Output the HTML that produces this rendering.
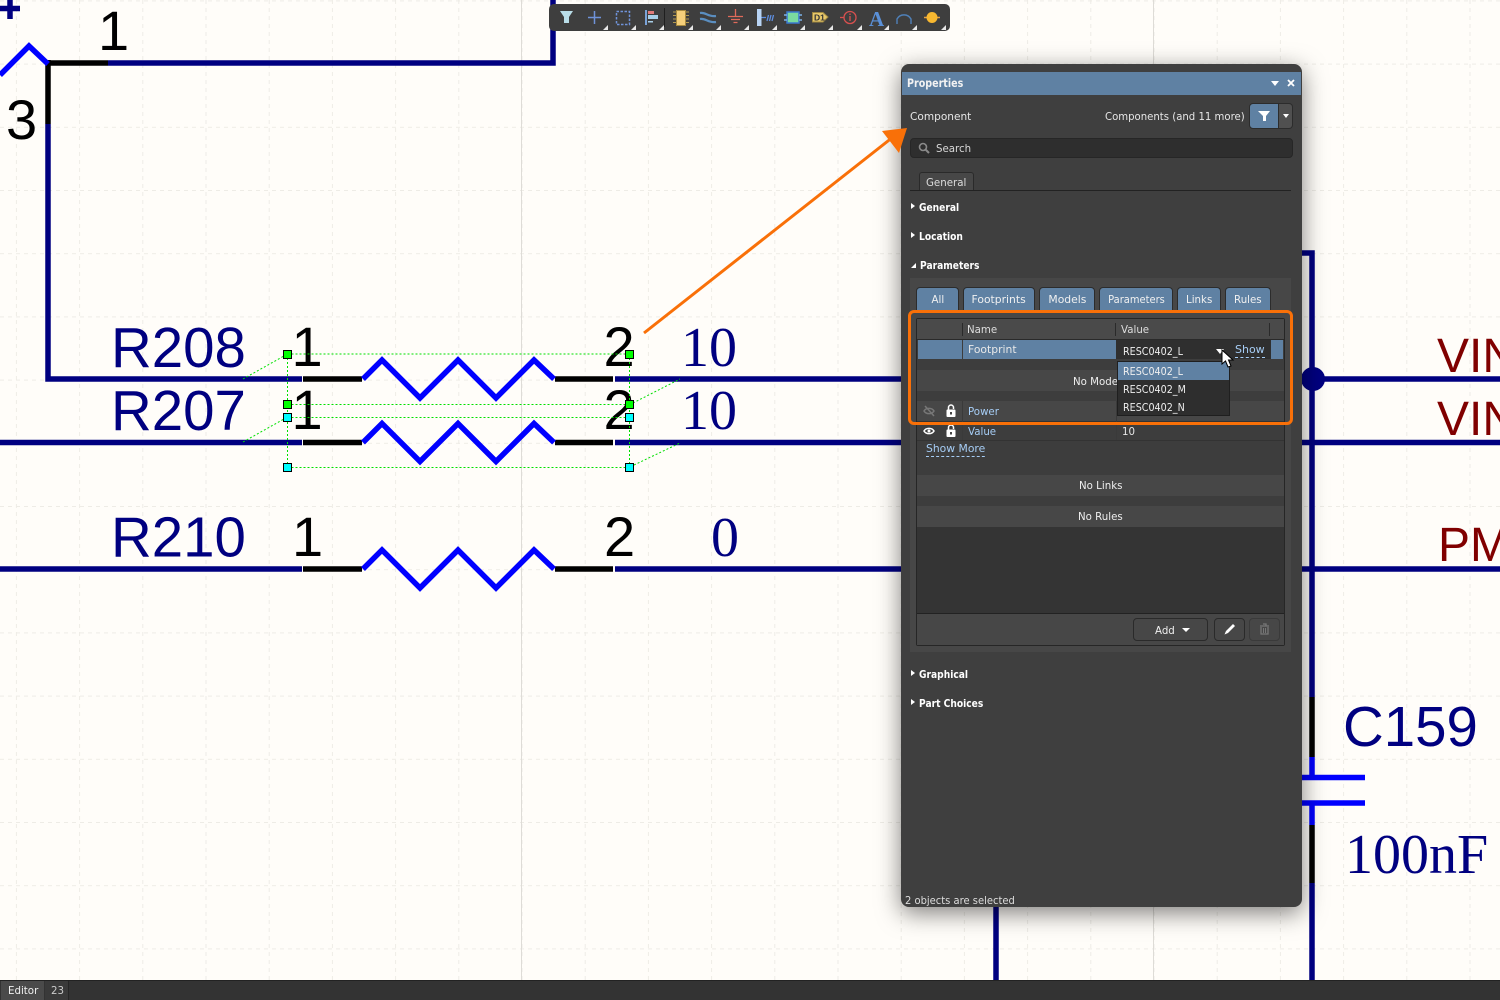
<!DOCTYPE html>
<html><head><meta charset="utf-8"><style>
html,body{margin:0;padding:0;background:#fffdf9;width:1500px;height:1000px;overflow:hidden}
*{box-sizing:border-box}
#c{position:absolute;left:0;top:0}
.a{position:absolute}
.t{position:absolute;font:11px/14px "DejaVu Sans",sans-serif;color:#e6e6e6;white-space:nowrap;transform:scaleX(.93);transform-origin:0 0;margin-top:1px}
.b{font-weight:bold;color:#fff;transform:scaleX(.83)}
.r{transform:scaleX(.87)}
.blue{color:#a6cdf5}
.tab{position:absolute;top:287px;height:24px;background:#5f81a3;border:1px solid #2c2c2c;border-bottom:0;border-radius:4px 4px 0 0;color:#f0f0f0;font:11px/24px "DejaVu Sans",sans-serif;text-align:center}
.tab span{display:inline-block;transform:scaleX(.93)}
.tri{position:absolute;width:0;height:0;border-top:3.5px solid transparent;border-bottom:3.5px solid transparent;border-left:4px solid #fff}
.btn{position:absolute;border:1px solid #2a2a2a;border-radius:4px;background:#474747}
.row{position:absolute;left:917px;width:367px}
</style></head><body>
<svg id="c" width="1500" height="1000" xmlns="http://www.w3.org/2000/svg">
<defs><pattern id="gv" width="63.2" height="8" patternUnits="userSpaceOnUse" x="15.9"><rect x="0" y="0" width="1" height="4" fill="#eeece6"/></pattern>
<pattern id="gh" width="8" height="63.2" patternUnits="userSpaceOnUse" y="63.6"><rect x="0" y="0" width="4" height="1" fill="#eeece6"/></pattern></defs>
<rect width="1500" height="980" fill="url(#gv)"/>
<rect width="1500" height="980" fill="url(#gh)"/>
<rect x="521" y="0" width="1" height="980" fill="#dedcd7"/>
<rect x="1153" y="0" width="1" height="980" fill="#dedcd7"/>
<g fill="none" stroke-width="5.5">
<g stroke="#000080">
<path d="M0 8.5H20M10 0V19"/>
<path d="M108 63H553V0"/>
<path d="M48 124V379H302M615 379H905"/>
<path d="M0 442.500H302M615 442.500H905"/>
<path d="M0 569H302M615 569H905"/>
<path d="M1302 253H1312V697M1312 883V980M996 905V980M1302 379H1500M1302 442.500H1500M1302 569H1500"/>
</g>
<g stroke="#000">
<path d="M48 63H108M48 60V124"/>
<path d="M303 379H362M555 379H613M303 442.500H362M555 442.500H613M303 569H362M555 569H613"/>
<path d="M1312 697V757M1312 825V883"/>
</g>
<g stroke="#0000ff" stroke-linejoin="miter">
<path d="M0 75L29 46L48 64"/>
<path d="M363 379L382 360L420 398L458 360L496 398L534 360L554 379"/>
<path d="M363 442.500L382 423.500L420 461.500L458 423.500L496 461.500L534 423.500L554 442.500"/>
<path d="M363 569L382 550L420 588L458 550L496 588L534 550L554 569"/>
<path d="M1312 757V777M1312 803V825"/>
<path d="M1300 777.500H1365M1300 803H1365"/>
</g>
</g>
<circle cx="1313" cy="379" r="12" fill="#000080"/>
<g font-family="'Liberation Sans',sans-serif" font-size="56.400" fill="#000080">
<text x="111" y="367">R208</text><text x="111" y="430">R207</text><text x="111" y="556.500">R210</text>
<text x="1343" y="746">C159</text>
</g>
<g font-family="'Liberation Sans',sans-serif" font-size="56" fill="#000">
<text x="98" y="50">1</text><text x="6" y="139">3</text>
<text x="291.500" y="366">1</text><text x="291.500" y="429">1</text><text x="292" y="556">1</text>
<text x="603.500" y="366">2</text><text x="603.500" y="429">2</text><text x="604" y="556">2</text>
</g>
<g font-family="'Liberation Serif',serif" font-size="56" fill="#000080">
<text x="681" y="366">10</text><text x="681" y="429">10</text><text x="711" y="556">0</text>
<text x="1345" y="873">100nF</text>
</g>
<g font-family="'Liberation Sans',sans-serif" font-size="48" fill="#800000">
<text x="1437" y="372">VIN</text><text x="1437" y="435">VIN</text>
<text x="1438" y="561">PM</text>
</g>
<g fill="none" stroke="#00e000" stroke-width="1" stroke-dasharray="2 2">
<path d="M287.500 354H629.500M287.500 404.500H629.500M287.500 417.500H629.500M287.500 467.500H629.500M287.500 354V467M629.500 354V467"/>
<path d="M243 379L284 356M243 442L284 419M633 403L680 379M634 465L680 443"/>
</g>
<g stroke="#000" stroke-width="1">
<g fill="#00ff00"><rect x="283.500" y="350.500" width="8" height="8"/><rect x="625.500" y="350.500" width="8" height="8"/><rect x="283.500" y="400.500" width="8" height="8"/><rect x="625.500" y="400.500" width="8" height="8"/></g>
<g fill="#00ffff"><rect x="283.500" y="413.500" width="8" height="8"/><rect x="625.500" y="413.500" width="8" height="8"/><rect x="283.500" y="463.500" width="8" height="8"/><rect x="625.500" y="463.500" width="8" height="8"/></g>
</g>
</svg>

<!-- toolbar -->
<div class="a" style="left:549px;top:4px;width:401px;height:27px;background:#3e3e3e;border-radius:5px"></div>
<svg class="a" style="left:549px;top:4px" width="401" height="27" xmlns="http://www.w3.org/2000/svg">
<path d="M11 7H24L20 13V19H15V13Z" fill="#b9dde8"/>
<path d="M45.500 7V20M39 13.500H52" stroke="#6f92d8" stroke-width="1.500" fill="none"/>
<rect x="67.500" y="7.500" width="13" height="13" fill="none" stroke="#6f92d8" stroke-width="1.500" stroke-dasharray="2.500 1.500"/>
<rect x="96" y="6" width="2" height="15" fill="#7aa3d8"/><rect x="99" y="7" width="6" height="3" fill="#e07a7a"/><rect x="99" y="11" width="10" height="4" fill="#a8cfe8"/><rect x="99" y="17" width="5" height="1.500" fill="#a8cfe8"/>
<rect x="115" y="4" width="1" height="19" fill="#1f1f1f"/>
<path d="M124 8H128M124 11.500H128M124 15H128M124 18.500H128M136 8H140M136 11.500H140M136 15H140M136 18.500H140" stroke="#b49a50" stroke-width="1"/>
<rect x="127.500" y="6.500" width="9" height="15" fill="#f5cf7a" stroke="#a88a40"/>
<path d="M151 9C157 8 159 13 167 12M151 15C157 14 159 19 167 18" stroke="#5a8ec0" stroke-width="2.200" fill="none"/>
<path d="M186.500 5V12M179 12.500H194M182 15.500H191M184.500 18.500H188.500" stroke="#e06a5a" stroke-width="1.300" fill="none"/>
<rect x="208" y="5" width="4.500" height="17" fill="#b8d4f5"/><path d="M212.500 13.500H217M218 17L219.500 11M220.500 17L222 11M223 17L224.500 11" stroke="#5f8fe0" stroke-width="1.300" fill="none"/>
<rect x="238" y="8" width="12" height="11" fill="#7adba0" stroke="#3a78d0" stroke-width="1.500"/><path d="M235 11H238M235 16H238M250 11H253M250 16H253" stroke="#7ab0e8" stroke-width="1.500"/>
<path d="M263.500 8.500H274L279 13L274 18H263.500Z" fill="#e8c86a" stroke="#a08840"/>
<text x="265" y="16.500" font-family="'Liberation Sans',sans-serif" font-size="8.500" font-weight="bold" fill="#333">D1</text>
<path d="M291 13.500H295" stroke="#d8504f" stroke-width="1.300"/><circle cx="301" cy="13.500" r="6" fill="none" stroke="#d8504f" stroke-width="1.300"/><path d="M301 12V17M301 9.500V11" stroke="#d8504f" stroke-width="1.300"/>
<text x="320" y="22" font-family="'Liberation Serif',serif" font-size="21" font-weight="bold" fill="#5a90d8">A</text>
<path d="M348 20V15A8 8 0 0 1 362 15V20" fill="none" stroke="#4f80b8" stroke-width="1.400"/>
<path d="M375 13.500H391" stroke="#e8a040" stroke-width="1.500"/><circle cx="383" cy="13.500" r="5.500" fill="#f8b830"/>
<g fill="#e8e8e8"><path d="M54 26H59V21Z"/><path d="M82 26H87V21Z"/><path d="M110 26H115V21Z"/><path d="M139 26H144V21Z"/><path d="M167 26H172V21Z"/><path d="M195 26H200V21Z"/><path d="M223 26H228V21Z"/><path d="M251 26H256V21Z"/><path d="M279 26H284V21Z"/><path d="M308 26H313V21Z"/><path d="M335 26H340V21Z"/><path d="M363 26H368V21Z"/><path d="M392 26H397V21Z"/></g>
</svg>

<!-- panel -->
<div class="a" style="left:901px;top:64px;width:401px;height:843px;background:#3f3f3f;border-radius:8px;box-shadow:0 6px 24px rgba(0,0,0,.5)"></div>
<div class="a" style="left:902px;top:72px;width:399px;height:23px;background:#5f81a3"></div>
<div class="t b" style="left:907px;top:75px;font-size:11.500px;color:#f2f2f2">Properties</div>
<div class="a" style="left:1271px;top:81px;border-left:4px solid transparent;border-right:4px solid transparent;border-top:5px solid #fff"></div>
<svg class="a" style="left:1287px;top:79px" width="8" height="8"><path d="M1 1L7 7M7 1L1 7" stroke="#fff" stroke-width="1.800"/></svg>
<div class="t" style="left:910px;top:109px;transform:scaleX(.96)">Component</div>
<div class="t" style="left:1105px;top:109px;transform:scaleX(.92)">Components (and 11 more)</div>
<div class="a" style="left:1249px;top:103px;width:30px;height:26px;background:#5f81a3;border:1px solid #2c2c2c;border-radius:4px 0 0 4px"></div>
<div class="a" style="left:1279px;top:103px;width:14px;height:26px;background:#505050;border:1px solid #2c2c2c;border-left:0;border-radius:0 4px 4px 0"></div>
<svg class="a" style="left:1258px;top:110px" width="12" height="12"><path d="M0 1H12L8 6V11H5V6Z" fill="#fff"/></svg>
<div class="a" style="left:1283px;top:114px;border-left:3.500px solid transparent;border-right:3.500px solid transparent;border-top:4px solid #fff"></div>
<div class="a" style="left:910px;top:138px;width:383px;height:20px;background:#2e2e2e;border:1px solid #262626;border-radius:4px"></div>
<svg class="a" style="left:918px;top:142px" width="12" height="12"><circle cx="5" cy="5" r="3.500" fill="none" stroke="#8a8a8a" stroke-width="1.600"/><path d="M7.500 7.500L11 11" stroke="#8a8a8a" stroke-width="2"/></svg>
<div class="t" style="left:936px;top:141px;color:#d8d8d8">Search</div>
<div class="a" style="left:919px;top:172px;width:55px;height:19px;background:#474747;border:1px solid #2a2a2a;border-bottom:0;border-radius:3px 3px 0 0"></div>
<div class="t" style="left:926px;top:175px;color:#ddd">General</div>
<div class="a" style="left:910px;top:190px;width:381px;height:1px;background:#222"></div>

<div class="tri" style="left:911px;top:203px"></div><div class="t b" style="left:919px;top:200px">General</div>
<div class="tri" style="left:911px;top:232px"></div><div class="t b" style="left:919px;top:229px">Location</div>
<div class="a" style="left:911px;top:263px;border-bottom:5px solid #fff;border-left:5px solid transparent"></div><div class="t b" style="left:920px;top:258px">Parameters</div>

<div class="a" style="left:910px;top:278px;width:381px;height:374px;background:#474747"></div>
<div class="tab" style="left:916px;width:43px"><span>All</span></div>
<div class="tab" style="left:963px;width:72px"><span style="transform:scaleX(.98)">Footprints</span></div>
<div class="tab" style="left:1039px;width:56px"><span style="transform:scaleX(.98)">Models</span></div>
<div class="tab" style="left:1099px;width:74px"><span style="transform:scaleX(.9)">Parameters</span></div>
<div class="tab" style="left:1177px;width:44px"><span>Links</span></div>
<div class="tab" style="left:1225px;width:46px"><span>Rules</span></div>

<div class="a" style="left:916px;top:318px;width:369px;height:328px;background:#3d3d3d;border:1px solid #262626;border-radius:2px"></div>
<div class="row" style="top:319px;height:20px;background:#4a4a4a"></div>
<div class="a" style="left:917px;top:339px;width:367px;height:1px;background:#2a2a2a"></div>
<div class="a" style="left:962px;top:323px;width:1px;height:13px;background:#2a2a2a"></div>
<div class="a" style="left:1115px;top:323px;width:1px;height:13px;background:#2a2a2a"></div>
<div class="a" style="left:1269px;top:323px;width:1px;height:13px;background:#2a2a2a"></div>
<div class="t" style="left:967px;top:322px;color:#ddd">Name</div>
<div class="t" style="left:1121px;top:322px;color:#ddd">Value</div>
<div class="row" style="top:340px;left:918px;width:365px;height:19px;background:#5f81a3"></div>
<div class="a" style="left:962px;top:340px;width:1px;height:19px;background:#3d3d3d"></div>
<div class="a" style="left:1116px;top:340px;width:155px;height:19px;background:#2f2f2f"></div>
<div class="t" style="left:968px;top:342px;color:#e8e8e8;transform:scaleX(.98)">Footprint</div>
<div class="t r" style="left:1123px;top:344px;color:#eee">RESC0402_L</div>
<div class="a" style="left:1216px;top:349px;border-left:4px solid transparent;border-right:4px solid transparent;border-top:5px solid #fff"></div>
<div class="t blue" style="left:1235px;top:342px;border-bottom:1px dashed #a6cdf5;padding-bottom:0;transform:scaleX(1)">Show</div>

<div class="row" style="top:370px;height:21px;background:#474747"></div>
<div class="t" style="left:1073px;top:374px;color:#eee">No Models</div>
<div class="row" style="top:401px;height:20px;background:#474747"></div>
<div class="a" style="left:917px;top:421px;width:367px;height:1px;background:#333"></div>
<div class="a" style="left:917px;top:440px;width:367px;height:1px;background:#333"></div>
<div class="a" style="left:962px;top:401px;width:1px;height:39px;background:#3a3a3a"></div>
<div class="a" style="left:1116px;top:401px;width:1px;height:39px;background:#3a3a3a"></div>
<svg class="a" style="left:923px;top:405px" width="13" height="12"><path d="M1 6C3 2.500 9 2.500 11 6C9 9.500 3 9.500 1 6Z" fill="none" stroke="#777" stroke-width="1.500"/><path d="M2 1L11 11" stroke="#777" stroke-width="1.500"/></svg>
<svg class="a" style="left:946px;top:404px" width="10" height="13"><path d="M2.500 6V3.500A2.500 2.500 0 0 1 7.500 3.500V5" fill="none" stroke="#fff" stroke-width="1.500"/><rect x=".5" y="5.500" width="9" height="7.500" rx="1" fill="#fff"/><rect x="4" y="8" width="2" height="2.500" fill="#444"/></svg>
<div class="t blue" style="left:968px;top:404px">Power</div>
<svg class="a" style="left:923px;top:425px" width="12" height="12"><path d="M1 6C3 2.500 9 2.500 11 6C9 9.500 3 9.500 1 6Z" fill="none" stroke="#fff" stroke-width="1.500"/><circle cx="6" cy="6" r="1.500" fill="#fff"/></svg>
<svg class="a" style="left:946px;top:424px" width="10" height="13"><path d="M2.500 6V3.500A2.500 2.500 0 0 1 7.500 3.500V5" fill="none" stroke="#fff" stroke-width="1.500"/><rect x=".5" y="5.500" width="9" height="7.500" rx="1" fill="#fff"/><rect x="4" y="8" width="2" height="2.500" fill="#444"/></svg>
<div class="t blue" style="left:968px;top:424px">Value</div>
<div class="t" style="left:1122px;top:424px">10</div>
<div class="t blue" style="left:926px;top:441px;border-bottom:1px dashed #a6cdf5;padding-bottom:0;transform:scaleX(.98)">Show More</div>
<div class="row" style="top:475px;height:21px;background:#474747"></div>
<div class="t" style="left:1079px;top:478px;color:#eee">No Links</div>
<div class="row" style="top:506px;height:21px;background:#474747"></div>
<div class="t" style="left:1078px;top:509px;color:#eee">No Rules</div>
<div class="row" style="top:527px;height:86px;background:#343434"></div>
<div class="a" style="left:917px;top:613px;width:367px;height:1px;background:#222"></div>
<div class="row" style="top:614px;height:31px;background:#474747"></div>
<div class="btn" style="left:1133px;top:618px;width:75px;height:23px"></div>
<div class="t" style="left:1155px;top:623px;color:#f0f0f0">Add</div>
<div class="a" style="left:1182px;top:628px;border-left:4px solid transparent;border-right:4px solid transparent;border-top:4px solid #fff"></div>
<div class="btn" style="left:1214px;top:618px;width:31px;height:23px"></div>
<svg class="a" style="left:1223px;top:622px" width="14" height="14"><path d="M1.500 12.500L3 9L10 2L12 4L5 11Z" fill="#fff"/></svg>
<div class="btn" style="left:1249px;top:618px;width:31px;height:23px;border-color:#3a3a3a"></div>
<svg class="a" style="left:1259px;top:623px" width="11" height="12"><path d="M1 3H10M4 1H7V3M2 4V11H9V4" fill="none" stroke="#777" stroke-width="1.300"/><path d="M4.500 5V10M6.500 5V10" stroke="#777"/></svg>

<div class="tri" style="left:911px;top:670px"></div><div class="t b" style="left:919px;top:667px">Graphical</div>
<div class="tri" style="left:911px;top:699px"></div><div class="t b" style="left:919px;top:696px">Part Choices</div>
<div class="t" style="left:905px;top:893px;color:#ddd;transform:scaleX(.905)">2 objects are selected</div>

<!-- dropdown -->
<div class="a" style="left:1117px;top:361px;width:113px;height:55px;background:#2e2e2e;border:1px solid #1f1f1f"></div>
<div class="a" style="left:1118px;top:362px;width:111px;height:18px;background:#5f81a3"></div>
<div class="t r" style="left:1123px;top:364px;color:#f0f0f0">RESC0402_L</div>
<div class="t r" style="left:1123px;top:382px;color:#eee">RESC0402_M</div>
<div class="t r" style="left:1123px;top:400px;color:#eee">RESC0402_N</div>

<!-- orange highlight -->
<div class="a" style="left:908px;top:310px;width:385px;height:115px;border:3px solid #f97008;border-radius:6px"></div>
<svg class="a" style="left:0;top:0" width="1000" height="400" xmlns="http://www.w3.org/2000/svg">
<path d="M644 333L893 137" stroke="#f97008" stroke-width="3" fill="none"/>
<path d="M907 128L899 153L882 131Z" fill="#f97008"/>
</svg>

<!-- cursor -->
<svg class="a" style="left:1221px;top:349px" width="14" height="20"><path d="M1 1V15L4.500 12L7 18L10 17L7.500 11H12Z" fill="#fff" stroke="#000" stroke-width="1"/></svg>

<!-- status bar -->
<div class="a" style="left:0;top:980px;width:1500px;height:20px;background:#333;border-top:1px solid #222"></div>
<div class="a" style="left:1px;top:981px;width:43px;height:19px;background:#4a4a4a"></div>
<div class="a" style="left:45px;top:981px;width:24px;height:19px;background:#3a3a3a;border-right:1px solid #262626"></div>
<div class="t" style="left:8px;top:983px;color:#f0f0f0">Editor</div>
<div class="t" style="left:51px;top:983px;color:#ccc">23</div>
</body></html>
